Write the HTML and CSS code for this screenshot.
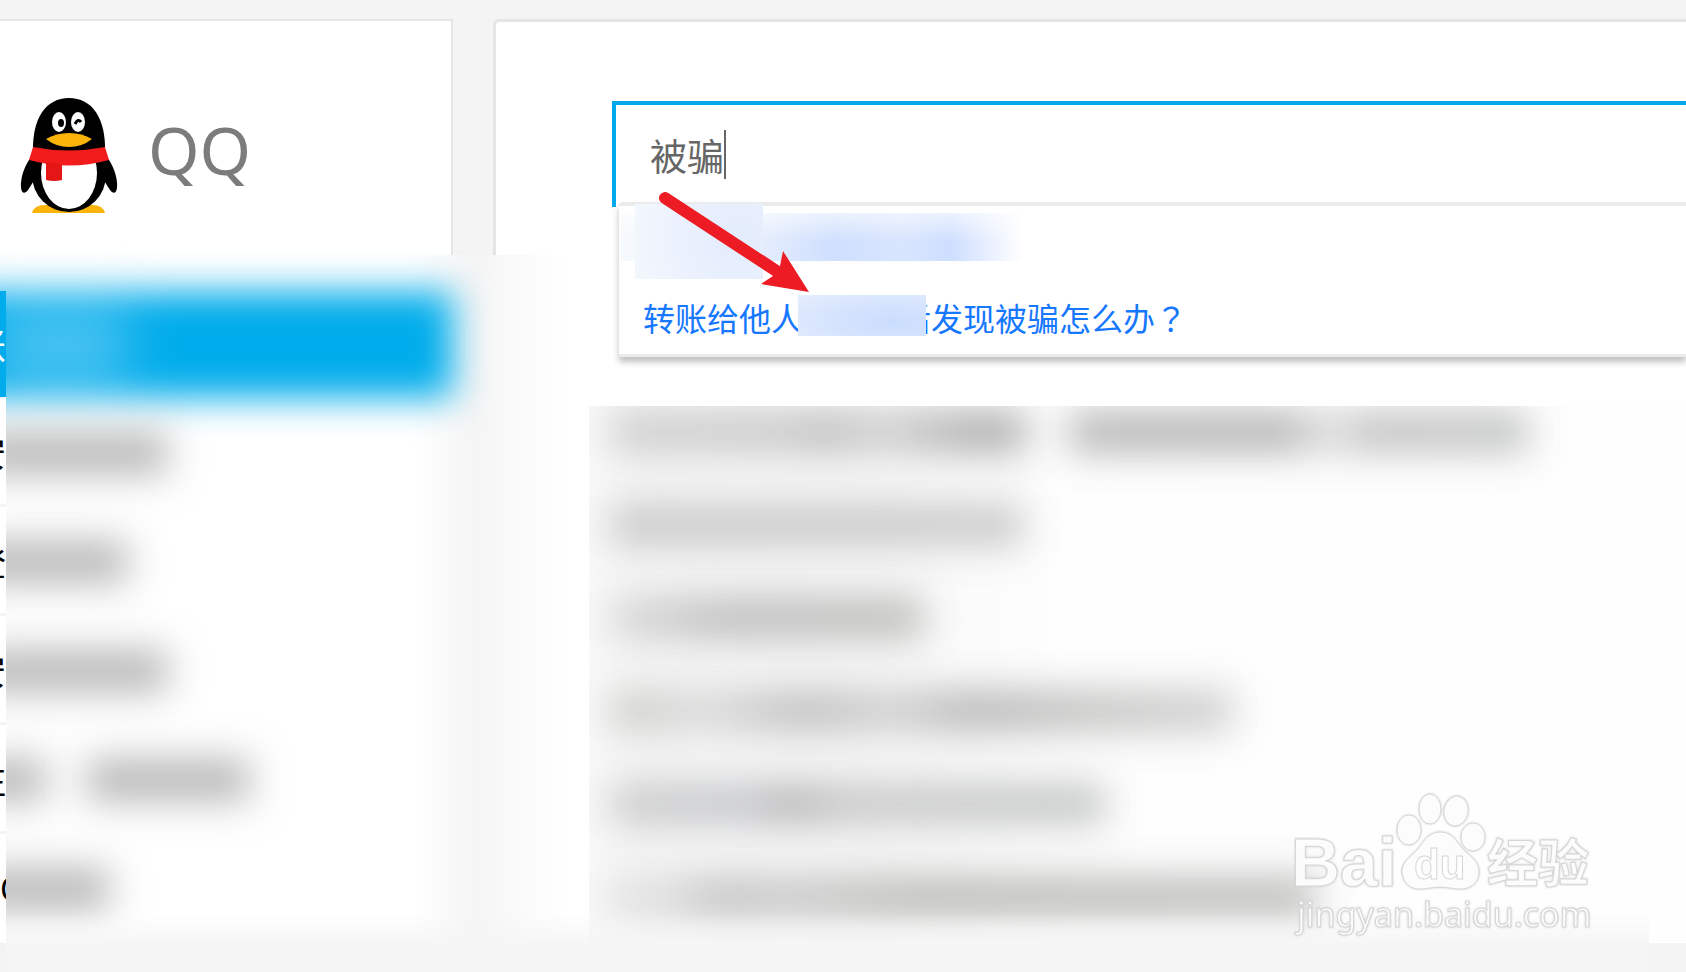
FILE: index.html
```html
<!DOCTYPE html>
<html lang="zh-CN">
<head>
<meta charset="utf-8">
<title>QQ</title>
<link rel="stylesheet" href="styles.css">
</head>
<body>
<div class="page">
  <aside class="sidebar">
    <header class="brand">
      <svg class="brand-logo" viewBox="20 27 98 118" aria-hidden="true">
        <path d="M32 143Q34 135 45 135H92Q103 135 105 143Z" fill="#fbb40a"/>
        <path d="M32 86C25 94 20 108 21 118C22 124 25 124 28 120L35 109C45 90 45 84 32 86Z"/>
        <path d="M106 86C113 94 118 108 117 118C116 124 113 124 110 120L103 109C93 90 93 84 106 86Z"/>
        <ellipse cx="69" cy="105" rx="37" ry="37"/>
        <ellipse cx="69" cy="103" rx="28" ry="36" fill="#fff"/>
        <path d="M33 82C32 48 46 28 69 28C92 28 106 48 105 82C92 90 46 90 33 82Z"/>
        <path d="M33 77Q69 84 105 77L109 90Q69 101 29 90Z" fill="#f21c1c"/>
        <path d="M46 92L62 94V110Q54 112 46 110Z" fill="#e51616"/>
        <ellipse cx="59" cy="52" rx="7" ry="10" fill="#fff"/>
        <ellipse cx="78" cy="52" rx="7" ry="10" fill="#fff"/>
        <ellipse cx="61" cy="53" rx="3" ry="4"/>
        <path d="M75 54Q78 48 81 52" fill="none" stroke="#000" stroke-width="3"/>
        <path d="M46 69Q56 63 69 63Q82 63 92 69Q82 77 69 77Q56 77 46 69Z" fill="#fbb40a"/>
      </svg>
      <span class="brand-name">QQ</span>
    </header>
    <nav class="menu">
      <a class="menu-item active" href="#"><span class="menu-edge">账</span><span class="menu-fill"><i class="bar"></i></span></a>
      <a class="menu-item" href="#"><span class="menu-edge">安</span><span class="bar w-lg"></span></a>
      <a class="menu-item" href="#"><span class="menu-edge">登</span><span class="bar w-md"></span></a>
      <a class="menu-item" href="#"><span class="menu-edge">安</span><span class="bar w-lg"></span></a>
      <a class="menu-item" href="#"><span class="menu-edge">注</span><span class="bar w-xs"></span><span class="bar w-lg"></span></a>
      <a class="menu-item" href="#"><span class="menu-edge start">Q</span><span class="bar w-sm"></span></a>
    </nav>
  </aside>
  <div class="gutter"></div>
  <main class="panel">
    <div class="search">
      <input class="search-input" type="text" aria-label="搜索" value="被骗">
      <span class="caret"></span>
      <ul class="suggest">
        <li class="suggest-item"><span class="mask mask-wide"></span><span class="mask mask-tall"></span></li>
        <li class="suggest-item"><a class="suggest-link" href="#">转账给他人<span class="mask mask-inline"></span>后发现被骗怎么办<span class="mark" lang="zh-TW">？</span></a></li>
      </ul>
    </div>
    <ul class="results">
      <li class="result"><span class="bar c1"></span><span class="bar c2"></span></li>
      <li class="result"><span class="bar c3"></span></li>
      <li class="result"><span class="bar c4"></span></li>
      <li class="result"><span class="bar c5"></span></li>
      <li class="result"><span class="bar c6"></span></li>
      <li class="result"><span class="bar c7"></span></li>
    </ul>
    <svg class="arrow" viewBox="655 185 160 115" aria-hidden="true">
      <path d="M665 198L778 272" stroke="#ed1c24" stroke-width="12" stroke-linecap="round"/>
      <path d="M809 292L783 251L780 266L773 276L761 284Z" fill="#ed1c24"/>
    </svg>
  </main>
  <div class="fade"></div>
  <svg class="watermark" viewBox="0 0 320 170" role="img" aria-label="Baidu 经验">
    <g class="wm-shape">
      <ellipse cx="129" cy="49" rx="12" ry="15"/>
      <ellipse cx="150" cy="28" rx="11" ry="15"/>
      <ellipse cx="176" cy="30" rx="12" ry="15" transform="rotate(10 176 30)"/>
      <ellipse cx="193" cy="56" rx="12" ry="14"/>
      <path d="M160 51C175 51 177 64 187 72C196 79 199 84 199 92C198 103 190 108 180 108C172 108 168 106 160 106C152 106 148 108 140 108C130 108 123 102 122 91C122 83 127 78 134 72C143 64 146 51 160 51Z"/>
    </g>
    <text class="wm-big" x="11" y="105">Bai</text>
    <text class="wm-du" x="134" y="98">du</text>
    <text class="wm-cjk" x="207" y="101">经验</text>
    <text class="wm-url" x="17" y="146">jingyan.baidu.com</text>
  </svg>
</div>
</body>
</html>
```
FILE: styles.css
```css
* { box-sizing: border-box; }

body {
  margin: 0;
  background: #f4f4f4;
  font-family: "Noto Sans", "Noto Sans CJK SC", sans-serif;
}

ul { margin: 0; padding: 0; list-style: none; }
a { color: inherit; text-decoration: none; }

.page {
  position: relative;
  display: flex;
  min-height: 100vh;
  padding: 19px 0 30px;
  overflow: hidden;
}

/* Sidebar */
.sidebar {
  flex: 0 0 27%;
  max-width: 453px;
  background: #fff;
}

.brand {
  display: flex;
  align-items: center;
  gap: 30px;
  height: 236px;
  padding: 36px 20px 0;
  border: solid #e5e5e5;
  border-width: 2px 2px 0 0;
}

.brand-logo { width: 98px; height: 118px; }

.brand-name {
  color: #7c7c7c;
  font-size: 66px;
  line-height: 66px;
  padding-bottom: 14px;
}

.menu {
  position: relative;
  z-index: 2;
  padding-top: 36px;
}

.menu-item {
  display: flex;
  align-items: center;
  height: 109px;
}

.menu-item.active { height: 107px; }

.menu-edge {
  position: relative;
  z-index: 3;
  display: flex;
  justify-content: flex-end;
  align-items: center;
  flex: 0 0 6px;
  height: 100%;
  overflow: hidden;
  background: #fff;
  border-bottom: 3px solid #f4f4f4;
  color: #000;
  font-size: 36px;
}

.menu-item:last-child .menu-edge { border-bottom: 0; }
.menu-edge.start { justify-content: flex-start; font-size: 32px; }

.active .menu-edge {
  background: #00aceb;
  border-bottom: 1px solid #f4f4f4;
  color: #fff;
}

.menu-fill {
  display: flex;
  align-items: center;
  flex: 1;
  height: 100%;
  margin-left: -60px;
  padding-left: 50px;
  background: #00aceb;
  filter: blur(18px);
}

.bar {
  flex: none;
  height: 40px;
  background: #b8b8b8;
  box-shadow: 0 0 30px 12px rgba(0, 0, 0, 0.04);
  filter: blur(18px);
}

.menu-item > .bar:nth-child(2) { margin-left: -30px; }
.menu-item > .bar + .bar { margin-left: 44px; }
.menu-fill .bar { width: 130px; height: 60px; background: #54c6f2; box-shadow: none; }
.w-lg { width: 190px; }
.w-md { width: 150px; }
.w-sm { width: 132px; }
.w-xs { width: 68px; }
.menu-item > .w-xs + .w-lg { width: 160px; }

/* Space between the two panels */
.gutter { position: relative; flex: 0 0 40px; }

.gutter::after {
  content: "";
  position: absolute;
  z-index: 1;
  top: 236px;
  bottom: 0;
  left: -40px;
  right: -80px;
  background: linear-gradient(90deg, #fff 0, #f5f5f5 38%, #f6f6f6 45%, #fcfcfc 75%, #fff 100%);
}

/* Main panel */
.panel {
  position: relative;
  flex: 1;
  min-width: 0;
  padding: 79px 0 0 116px;
  background: #fff;
  border: solid #e5e5e5;
  border-width: 3px 0 0 3px;
  border-radius: 6px 0 0 0;
}

.search { position: relative; z-index: 3; height: 305px; }

.search-input {
  display: block;
  width: 100%;
  height: 106px;
  padding: 0 0 2px 34px;
  border: 4px solid #00a8ec;
  border-right: 0;
  border-bottom: 0;
  outline: 0;
  background: #fff;
  color: #666;
  font: 400 37px/48px "Noto Sans CJK SC", sans-serif;
}

.caret {
  position: absolute;
  top: 29px;
  left: 112px;
  width: 2px;
  height: 49px;
  background: #666;
}

.suggest {
  position: absolute;
  top: 101px;
  left: 7px;
  right: 0;
  background: #fff;
  border: solid #ebebeb;
  border-width: 4px 0 3px;
  border-radius: 4px 0 0 0;
  box-shadow: 0 5px 6px rgba(0, 0, 0, 0.25);
}

.search::after {
  content: "";
  position: absolute;
  z-index: -1;
  top: 106px;
  bottom: 0;
  left: 7px;
  right: 0;
  background: #fff;
}

.suggest-item {
  position: relative;
  display: flex;
  align-items: center;
  height: 74px;
  padding-left: 24px;
}

.suggest-link {
  color: #1677ff;
  font: 400 32px/48px "Noto Sans CJK SC", sans-serif;
  white-space: nowrap;
}

.mark { font-family: "Noto Sans CJK TC", sans-serif; }

.mask { background: #e2ebfd; }

.mask-wide {
  position: absolute;
  top: 7px;
  left: 2px;
  width: 402px;
  height: 48px;
  background:
    linear-gradient(180deg, rgba(255, 255, 255, 0.6), rgba(255, 255, 255, 0) 60%),
    linear-gradient(90deg, #f6f9fd 0, #e4edfd 35%, #cfdffe 53%, #d8e5fe 70%, #cedeff 82%, #f2f6ff 95%, #fff 100%);
}

.mask-tall {
  position: absolute;
  top: -2px;
  left: 16px;
  width: 128px;
  height: 75px;
  background: radial-gradient(circle at 80% 45%, #e3ecfd 0, #e8effd 35%, #f2f6fd 90%);
}

.mask-inline {
  position: relative;
  display: inline-block;
  width: 128px;
  height: 41px;
  margin: 2px -27px 0 -5px;
  vertical-align: top;
  background: radial-gradient(ellipse at 75% 65%, #cbddfe 0, #d6e4fd 50%, #e6eefd 100%);
}

/* Result rows */
.results {
  position: relative;
  z-index: 2;
  height: 536px;
  margin-left: -23px;
  padding-left: 23px;
  overflow: hidden;
  background: linear-gradient(90deg, #f9f9f9, #f7f7f7 60px, #f8f8f8 280px, #fefefe 480px);
}

.result {
  display: flex;
  align-items: center;
  height: 93px;
}

.result:first-child { height: 72px; padding-bottom: 20px; }
.result .bar { opacity: 0.88; }
.result .bar + .bar { margin-left: 44px; }
.c1 { width: 414px; background: linear-gradient(90deg, #ccc, #c4c4c4 45%, #b5b5b5 50%, #ccc 65%, #a4a4a4 88%, #acacac); }
.c2 { width: 458px; background: linear-gradient(90deg, #b0b0b0, #acacac 46%, #ddd 57%, #bcbcbc 65%, #bcc0be); }
.c3 { width: 410px; background: #c5c5c5; }
.c4 { width: 310px; background: linear-gradient(90deg, #d8d8d8, #b8b8b8 35%, #b8b8b5); }
.c5 { width: 620px; background: linear-gradient(90deg, #c8c8c4, #d8d8d8 15%, #b8b8b8 31%, #ccc 45%, #b0b0b0 58%, #c0c0be 80%, #ccc); }
.c6 { width: 492px; background: linear-gradient(90deg, #c8c8c8, #c0c2c6 28%, #b0b0b0 36%, #c4c4c4 48%, #bec2c0); }
.c7 { width: 702px; background: linear-gradient(90deg, #dedede 7%, #bebebe 15%, #c4c4c4 25%, #b4b4b0 45%, #b8b8b6); }

/* Overlays */
.arrow {
  position: absolute;
  z-index: 4;
  top: 163px;
  left: 159px;
  width: 160px;
  height: 115px;
  fill: none;
}

.fade {
  position: absolute;
  z-index: 4;
  left: 6px;
  right: 37px;
  bottom: 0;
  height: 60px;
  background: linear-gradient(180deg, rgba(245, 245, 245, 0), #f5f5f5 60%);
}

.watermark {
  position: absolute;
  z-index: 5;
  right: 86px;
  bottom: 22px;
  width: 320px;
  height: 170px;
  filter: drop-shadow(0 0 1px #ccc);
}

.wm-shape, .watermark text {
  fill: #fff;
  fill-opacity: 0.95;
  stroke: #d6d6d6;
  stroke-width: 1px;
}

.wm-big { font: bold 68px "Liberation Sans", sans-serif; }
.wm-du { font: bold 42px "Liberation Sans", sans-serif; }
.wm-cjk { font: bold 51px "Noto Sans CJK SC", sans-serif; }
.wm-url { font: 34px "Noto Sans", sans-serif; }
```
